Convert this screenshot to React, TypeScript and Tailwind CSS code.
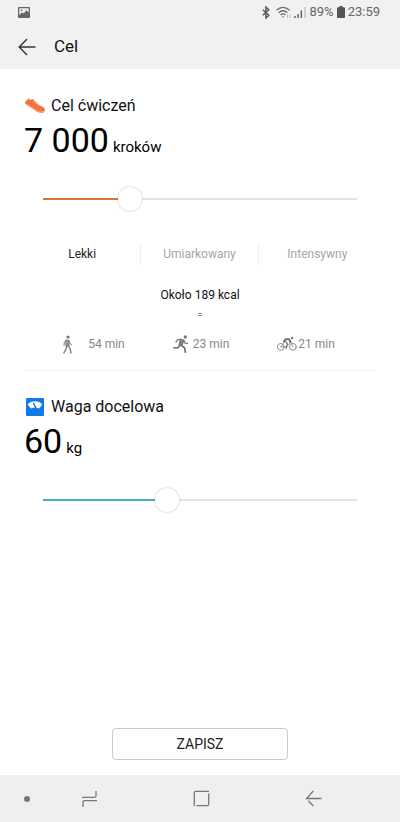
import { useState } from "react";
import type { ReactNode } from "react";

type SliderProps = {
  label: string;
  min: number;
  max: number;
  step: number;
  value: number;
  color: string;
  onChange: (value: number) => void;
};

const Slider = ({ label, min, max, step, value, color, onChange }: SliderProps) => {
  const percent = ((value - min) / (max - min)) * 100;

  return (
    <div className="px-[19px] pt-6">
      <input
        type="range"
        aria-label={label}
        min={min}
        max={max}
        step={step}
        value={value}
        onChange={(e) => onChange(Number(e.target.value))}
        style={{
          backgroundImage: `linear-gradient(to right, ${color} ${percent}%, #e4e4e4 ${percent}%)`,
        }}
        className="block h-6 w-full cursor-pointer appearance-none bg-[length:100%_2px] bg-center bg-no-repeat outline-none [&::-webkit-slider-thumb]:size-6 [&::-webkit-slider-thumb]:appearance-none [&::-webkit-slider-thumb]:rounded-full [&::-webkit-slider-thumb]:bg-white [&::-webkit-slider-thumb]:shadow-[0_0_2px_rgba(0,0,0,0.3)]"
      />
    </div>
  );
};

const ShoeIcon = () => (
  <svg viewBox="0 0 22 18" className="h-[18px] w-[22px]" aria-hidden="true">
    <path d="M1.200 5 4.600 1.300c.8 1.700 2.200 2.100 4 .8l6.600 6.200c1.700.9 4.600 1.400 5.400 3.400.6 1.700.3 3-1.100 3.700-1.800.7-4.700.3-6.700-1L1.700 7.200C1 6.600.8 5.800 1.200 5Z" fill="#f4723a" />
    <path d="M1.700 6.300 13 13.600c2 1.200 4.700 1.500 7 .8" fill="none" stroke="#f9b291" strokeWidth=".7" />
    <path d="m9.900 5.200 1.200-.8M11.700 6.900l1.200-.8M13.500 8.500l1.100-.7" stroke="#ffd9c7" strokeWidth=".7" strokeLinecap="round" />
  </svg>
);

const ScaleIcon = () => (
  <svg viewBox="0 0 18 18" className="mx-0.5 size-[18px]" aria-hidden="true">
    <rect width="18" height="18" rx="1" fill="#1479e8" />
    <path d="M1.800 6.200C5 2.300 13 2.300 16.200 6.200c-.8 1.900-2.100 3.300-3.700 4.300-2-1.200-5-1.200-7 0-1.600-1-2.900-2.400-3.700-4.300Z" fill="#fff" />
    <path d="m9.700 9.300-2.200-4" stroke="#1479e8" strokeWidth="1.400" strokeLinecap="round" />
  </svg>
);

const WalkIcon = () => (
  <svg viewBox="0 0 13 19" className="mr-3.5 h-[19px] w-[13px]" fill="none" stroke="#777" strokeLinecap="round" strokeLinejoin="round" aria-hidden="true">
    <circle cx="7" cy="2" r="1.600" fill="#777" stroke="none" />
    <path d="M5.300 5.200h2.500L8 11H5.200Z" fill="#999" strokeWidth="1" />
    <path d="M5 5.200 3.300 7.500 3 10.300M7.800 5.500l1.200 3 1.700 1.500" strokeWidth="1" />
    <path d="m5.700 11-.7 3.300L2.800 18M7.500 11l1.600 3 .9 4" strokeWidth="1.300" />
  </svg>
);

const RunIcon = () => (
  <svg viewBox="0 0 16 18" className="mr-1 h-[18px] w-4" fill="none" stroke="#777" strokeLinecap="round" strokeLinejoin="round" aria-hidden="true">
    <circle cx="12.300" cy="2" r="1.700" fill="#777" stroke="none" />
    <path d="m7.500 4.500 3.300.7-2 5.300-2.500-1Z" fill="#888" strokeWidth="1.400" />
    <path d="m8 4.400-3.500.3L3 7.300M10.700 5.500l1.300 2.700 2.700.1" strokeWidth="1.300" />
    <path d="m7 9.700-2 3-4 .1M8.500 10.500l3 2.200.9 4.500" strokeWidth="1.800" />
  </svg>
);

const BikeIcon = () => (
  <svg viewBox="0 0 21 16" className="mr-px h-4 w-[20px]" fill="none" stroke="#8a8a8a" strokeLinecap="round" strokeLinejoin="round" aria-hidden="true">
    <circle cx="4" cy="11" r="3.600" strokeWidth="1" />
    <circle cx="16.700" cy="11" r="3.600" strokeWidth="1" />
    <circle cx="15.900" cy="1.700" r="1.300" fill="#777" stroke="none" />
    <path d="M4 11 7.300 6.500M10 11l4-4.500M14.300 4.500 16.700 11M4 11h5.500" strokeWidth=".9" />
    <path d="M7.200 5.500 9 3h4l.8 3" stroke="#707070" strokeWidth="2" />
    <path d="m9 5.500 2 2.500-1.500 4.500" stroke="#777" strokeWidth="1.300" />
  </svg>
);

const StatusBar = () => (
  <div className="flex h-6 items-center justify-between pr-5 pl-[18px] text-[13px] text-[#666]">
    <svg viewBox="0 0 12 11" className="h-[11px] w-3" aria-label="Obraz">
      <rect width="12" height="11" rx="1" fill="#666" />
      <path d="M1.300 1.300h9.400v4.200L8.300 3.300 5.800 6.600 4.200 5.200 1.300 8.200Z" fill="#eee" />
      <circle cx="3.500" cy="3.200" r=".8" fill="#666" />
    </svg>
    <div className="flex items-center">
      <svg viewBox="0 0 10 13" className="mr-[5px] h-[13px] w-2.5" fill="none" stroke="#5c5c5c" strokeWidth="1.500" aria-hidden="true">
        <path d="m1.800 3.700 6 5.500L4.900 12V1l2.900 2.800-6 5.500" />
      </svg>
      <svg viewBox="0 0 16 13" className="mr-0.5 h-[13px] w-4" fill="none" stroke="#6c6c6c" strokeWidth="1.400" aria-hidden="true">
        <path d="M.5 4.300c4-3.700 9-3.700 13 0M2.600 6.700c2.700-2.500 6-2.500 8.700 0M4.600 9c1.500-1.400 3.300-1.400 4.800 0" />
        <path d="m5.700 10.300 1.300 1.500 1.300-1.500Z" fill="#777" stroke="none" />
        <path d="M11.500 8.500v3.500M14 8.500v3.500" stroke="#bbb" strokeWidth="1" />
      </svg>
      <svg viewBox="0 0 12 12" className="mr-[3px] size-3" fill="none" strokeWidth="1.500" aria-hidden="true">
        <path d="M1 12v-2M4 12V8M7.300 12V4.500" stroke="#666" />
        <path d="M11 12V1" stroke="#c4c4c4" />
      </svg>
      <span>89%</span>
      <svg viewBox="0 0 8 12" className="mx-[3px] h-3 w-2" fill="#555" aria-hidden="true">
        <path d="M2.500 0h3v1.200H7.200c.4 0 .8.4.8.8v9.200c0 .4-.4.800-.8.800H.8c-.4 0-.8-.4-.8-.8V2c0-.4.4-.8.800-.8h1.700Z" />
      </svg>
      <span>23:59</span>
    </div>
  </div>
);

type GoalHeaderProps = {
  icon: ReactNode;
  title: string;
  value: string;
  unit: string;
};

const GoalHeader = ({ icon, title, value, unit }: GoalHeaderProps) => (
  <>
    <div className="flex h-6 items-center gap-[5px]">
      {icon}
      <h2 className="text-base">{title}</h2>
    </div>
    <p className="flex h-[45px] items-baseline gap-1 text-black">
      <span className="text-[34px] leading-[45px]">{value}</span>
      <span className="text-[15px]">{unit}</span>
    </p>
  </>
);

const intensities = ["Lekki", "Umiarkowany", "Intensywny"];

const activities = [
  { name: "walk", icon: <WalkIcon />, time: "54 min" },
  { name: "run", icon: <RunIcon />, time: "23 min" },
  { name: "bike", icon: <BikeIcon />, time: "21 min" },
];

const NavBar = () => (
  <nav className="grid h-[47px] grid-cols-[54px_70px_1fr_70px_52px] items-center bg-[#efefef]">
    <button aria-label="Ukryj pasek" className="flex h-full items-center justify-center">
      <span className="size-1.5 rounded-full bg-[#777]" />
    </button>
    <button aria-label="Ostatnie" className="flex h-full items-center justify-center">
      <svg viewBox="0 0 17 18" className="h-[18px] w-[17px]" fill="none" stroke="#777" strokeWidth="1.300">
        <path d="M1 7.300h12.500c1 0 1.500-.5 1.500-1.500V1M16 10.700H3.500c-1 0-1.500.5-1.500 1.500V17" />
      </svg>
    </button>
    <button aria-label="Ekran główny" className="flex h-full items-center justify-center">
      <svg viewBox="0 0 17 17" className="size-[17px]" fill="none" stroke="#777" strokeWidth="1.300">
        <path d="M1.300 16V2.800c0-1 .5-1.500 1.500-1.500H16M15.700 3.500v10.700c0 1-.5 1.500-1.500 1.500H3.500" />
      </svg>
    </button>
    <button aria-label="Wstecz" className="flex h-full items-center justify-center">
      <svg viewBox="0 0 17 17" className="size-[17px]" fill="none" stroke="#777" strokeWidth="1.300">
        <path d="M16.500 8.500H1.500L8.300 1M3.300 10.700l5 5.300" />
      </svg>
    </button>
  </nav>
);

export default function App() {
  const [steps, setSteps] = useState(7000);
  const [weight, setWeight] = useState(60);
  const [intensity, setIntensity] = useState("Lekki");

  return (
    <div className="flex min-h-screen flex-col bg-white font-['Roboto',sans-serif] text-[#111]">
      <header className="bg-[#f1f1f1]">
        <StatusBar />
        <div className="flex h-[45px] items-center gap-[18px] pl-[18px]">
          <button aria-label="Wróć">
            <svg viewBox="0 0 18 18" className="size-[18px]" fill="none" stroke="#333" strokeWidth="1.400">
              <path d="M17.500 9H1.500M9 1 1.200 9 9 17" />
            </svg>
          </button>
          <h1 className="text-[17px]">Cel</h1>
        </div>
      </header>

      <main className="flex flex-1 flex-col px-6 pt-[25px]">
        <section className="border-b border-[#f0f0f0] pb-4">
          <GoalHeader
            icon={<ShoeIcon />}
            title="Cel ćwiczeń"
            value={`${Math.floor(steps / 1000)} ${String(steps % 1000).padStart(3, "0")}`}
            unit="kroków"
          />
          <Slider label="Cel ćwiczeń" min={0} max={27000} step={500} value={steps} color="#d9723f" onChange={setSteps} />

          <div className="mt-8 grid grid-cols-3 divide-x divide-[#eee]">
            {intensities.map((name) => (
              <button
                key={name}
                aria-pressed={intensity === name}
                onClick={() => setIntensity(name)}
                className={`h-[22px] text-xs ${intensity === name ? "text-[#222]" : "text-[#a5a5a5]"}`}
              >
                {name}
              </button>
            ))}
          </div>

          <p className="mt-5 text-center text-xs leading-5">Około 189 kcal</p>
          <p className="text-center text-[10px] leading-5 text-[#888]">=</p>
          <div className="mt-[9px] flex h-5 items-center justify-center gap-12 pr-1 text-xs text-[#888]">
            {activities.map(({ name, icon, time }) => (
              <div key={name} className="flex items-center">
                {icon}
                <span>{time}</span>
              </div>
            ))}
          </div>
        </section>

        <section className="pt-6">
          <GoalHeader icon={<ScaleIcon />} title="Waga docelowa" value={String(weight)} unit="kg" />
          <Slider label="Waga docelowa" min={20} max={124} step={1} value={weight} color="#3fb0c0" onChange={setWeight} />
        </section>

        <button className="mx-auto mt-auto mb-[15px] h-8 w-1/2 rounded border border-[#ccc] text-sm text-[#222]">
          ZAPISZ
        </button>
      </main>

      <NavBar />
    </div>
  );
}
